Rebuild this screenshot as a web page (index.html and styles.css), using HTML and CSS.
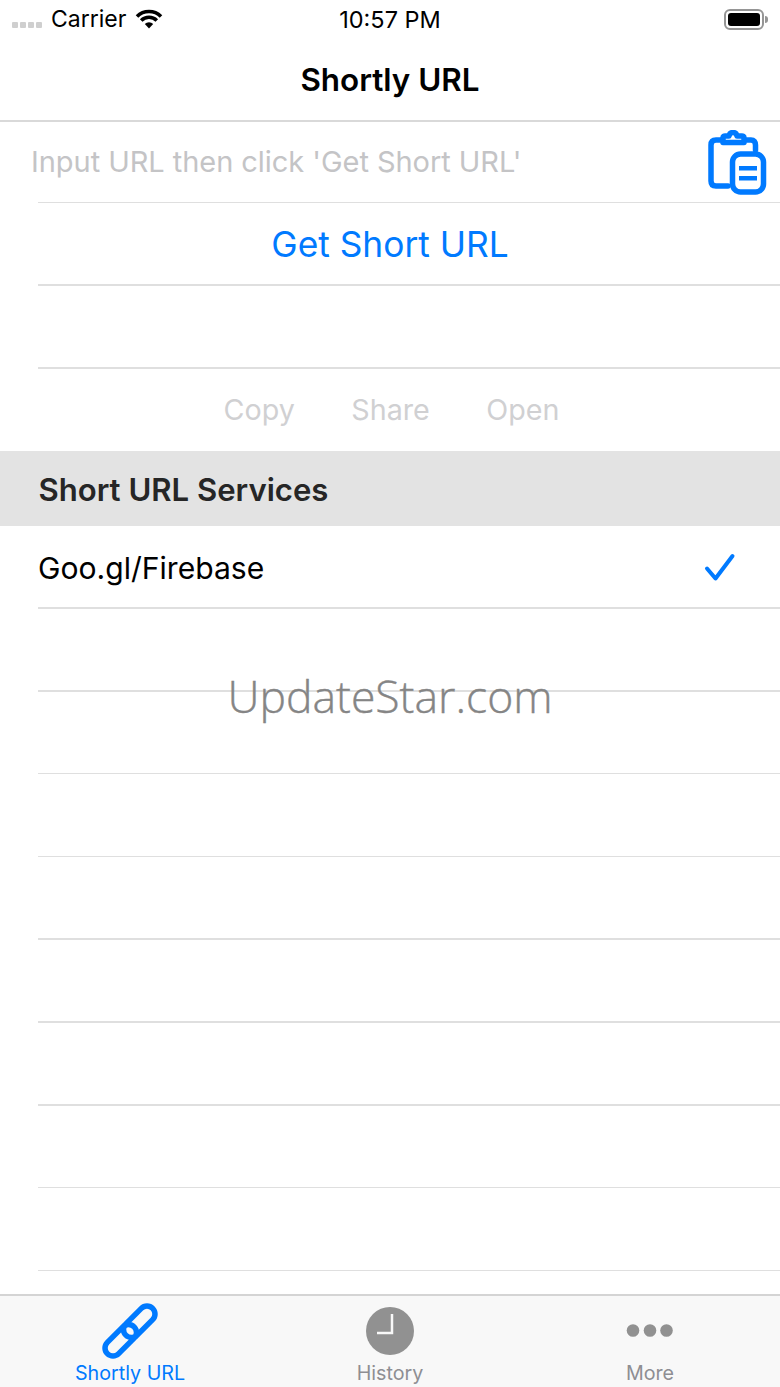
FILE: index.html
```html
<!DOCTYPE html>
<html lang="en">
<head>
<meta charset="utf-8">
<title>Shortly URL</title>
<link rel="stylesheet" href="styles.css">
</head>
<body>
<div class="app">
  <div class="status">
    <div class="status-left">
      <span class="signal"><i></i><i></i><i></i><i></i></span>
      <span class="carrier">Carrier</span>
      <svg class="wifi" viewBox="0 0 28 20" width="28" height="20"><g fill="none" stroke="#000" stroke-width="3.600"><path d="M2 7.500A17 17 0 0 1 26 7.500"/><path d="M6.200 11.500A11 11 0 0 1 21.800 11.500"/></g><path fill="#000" d="M14 19.500L9.800 15A6 6 0 0 1 18.200 15Z"/></svg>
    </div>
    <div class="clock">10:57 PM</div>
    <div class="battery"><span class="battery-shell"><span class="battery-fill"></span></span><span class="battery-cap"></span></div>
  </div>
  <header class="nav">Shortly URL</header>
  <main class="content">
    <div class="row row-input">
      <span class="placeholder">Input URL then click 'Get Short URL'</span>
      <svg class="paste" viewBox="0 0 60 66" width="60" height="66"><g fill="none" stroke="#007aff" stroke-width="5.500" stroke-linejoin="round" stroke-linecap="round"><path d="M13 10H8C4.500 10 3 12 3 15V51C3 54 4.500 56 8 56H20"/><path d="M39 10H43C46 10 47.500 12 47.500 15V20"/><path d="M15 7.500C15 6.500 16 6 17 6H21C21.500 3.500 23 2.500 25 2.500S28.500 3.500 29 6H34C35 6 36 6.500 36 7.500V12.500H15Z"/><rect x="24.500" y="24" width="31" height="38" rx="8"/></g><rect x="31" y="36" width="18" height="4.500" fill="#007aff"/><rect x="31" y="46" width="18" height="4.500" fill="#007aff"/></svg>
    </div>
    <div class="row row-center"><span class="link">Get Short URL</span></div>
    <div class="row"></div>
    <div class="row-actions"><span>Copy</span><span>Share</span><span>Open</span></div>
    <div class="section">Short URL Services</div>
    <div class="row row-service">
      <span class="service">Goo.gl/Firebase</span>
      <svg class="check" viewBox="0 0 32 30" width="32" height="30"><path d="M3 15.500L11.500 25.500L28.500 3" fill="none" stroke="#007aff" stroke-width="4" stroke-linecap="round" stroke-linejoin="round"/></svg>
    </div>
    <div class="row"></div>
    <div class="row"></div>
    <div class="row"></div>
    <div class="row"></div>
    <div class="row"></div>
    <div class="row"></div>
    <div class="row"></div>
    <div class="row"></div>
  </main>
  <nav class="tabs">
    <div class="tab tab-active">
      <svg class="tab-icon" viewBox="0 0 60 60" width="60" height="60"><g fill="none" stroke="#007aff" stroke-width="5.500"><rect x="31.250" y="1.800" width="16" height="37.900" rx="8" transform="rotate(45 39.250 20.750)"/><rect x="12.750" y="20.300" width="16" height="37.900" rx="8" transform="rotate(45 20.750 39.250)"/></g></svg>
      <span>Shortly URL</span>
    </div>
    <div class="tab">
      <svg class="tab-icon" viewBox="0 0 60 60" width="60" height="60"><circle cx="30" cy="30" r="24" fill="#919191"/><path d="M32 13V32H17" fill="none" stroke="#f8f8f8" stroke-width="2.500"/></svg>
      <span>History</span>
    </div>
    <div class="tab">
      <svg class="tab-icon" viewBox="0 0 60 60" width="60" height="60"><circle cx="13" cy="29.500" r="6.300" fill="#919191"/><circle cx="30" cy="29.500" r="6.300" fill="#919191"/><circle cx="46.500" cy="29.500" r="6.300" fill="#919191"/></svg>
      <span>More</span>
    </div>
  </nav>
  <div class="watermark">UpdateStar.com</div>
</div>
</body>
</html>
```
FILE: styles.css
```css
* { box-sizing: border-box; }
html, body { margin: 0; padding: 0; }
body { background: #fff; font-family: Inter, "Liberation Sans", sans-serif; color: #000; }
.app { position: relative; width: 780px; height: 1387px; display: flex; flex-direction: column; overflow: hidden; }

.status { height: 38px; display: grid; grid-template-columns: 1fr auto 1fr; align-items: center; padding: 0 12px; }
.status-left { display: flex; align-items: center; }
.signal { display: flex; gap: 2.500px; margin-top: 11px; width: 33px; }
.signal i { width: 5.500px; height: 6px; background: #cfcfcf; border-radius: 1px; }
.carrier { font-size: 23px; margin-left: 6px; }
.wifi { margin-left: 9px; margin-top: -1px; }
.clock { font-size: 23.500px; }
.battery { justify-self: end; display: flex; align-items: center; }
.battery-shell { width: 40px; height: 21px; border: 2px solid #959595; border-radius: 6px; padding: 2px; display: block; }
.battery-fill { display: block; height: 100%; background: #000; border-radius: 3px; }
.battery-cap { width: 3px; height: 7px; background: #959595; border-radius: 0 3px 3px 0; margin-left: 1px; }

.nav { height: 84px; border-bottom: 2px solid #d9d9d9; display: flex; align-items: center; justify-content: center; font-size: 31.400px; font-weight: 600; padding-top: 1px; flex: none; }

.content { flex: 1; min-height: 0; overflow: hidden; }
.row { height: 82.800px; position: relative; display: flex; align-items: center; }
.row::after { content: ""; position: absolute; left: 38px; right: 0; bottom: 0; height: 1.500px; background: #dfdfdf; }
.row-input { height: 81px; padding-left: 31px; padding-bottom: 2px; }
.placeholder { font-size: 29px; color: #c4c4c6; letter-spacing: -0.050px; }
.paste { position: absolute; right: 12px; top: 8px; }
.row-center { justify-content: center; padding-top: 1px; }
.link { font-size: 35.300px; color: #007aff; }
.row-actions { height: 82.400px; display: flex; align-items: center; justify-content: center; gap: 56.500px; padding-left: 3px; font-size: 28.700px; color: #d0d0d2; }
.section { height: 75px; background: #e3e3e3; display: flex; align-items: center; padding-left: 38.500px; padding-top: 3px; font-size: 31.100px; font-weight: 600; color: #262626; }
.row-service { padding-left: 38px; padding-top: 2px; }
.service { font-size: 30.100px; }
.check { position: absolute; left: 704px; top: 27px; }

.tabs { height: 93px; flex: none; background: #f8f8f8; border-top: 2px solid #d4d4d4; display: grid; grid-template-columns: 260px 260px 260px; }
.tab { display: flex; flex-direction: column; align-items: center; color: #8e8e93; font-size: 19.700px; }
.tab-icon { margin-top: 5px; height: 60px; }
.tab span { line-height: 24px; }
.tab-active { color: #007aff; }

.watermark { position: absolute; left: 0; right: 0; top: 664px; text-align: center; font-family: "Open Sans", sans-serif; font-weight: 300; font-size: 44.500px; line-height: 64px; color: #858585; -webkit-text-stroke: 0.4px #858585; }
```
